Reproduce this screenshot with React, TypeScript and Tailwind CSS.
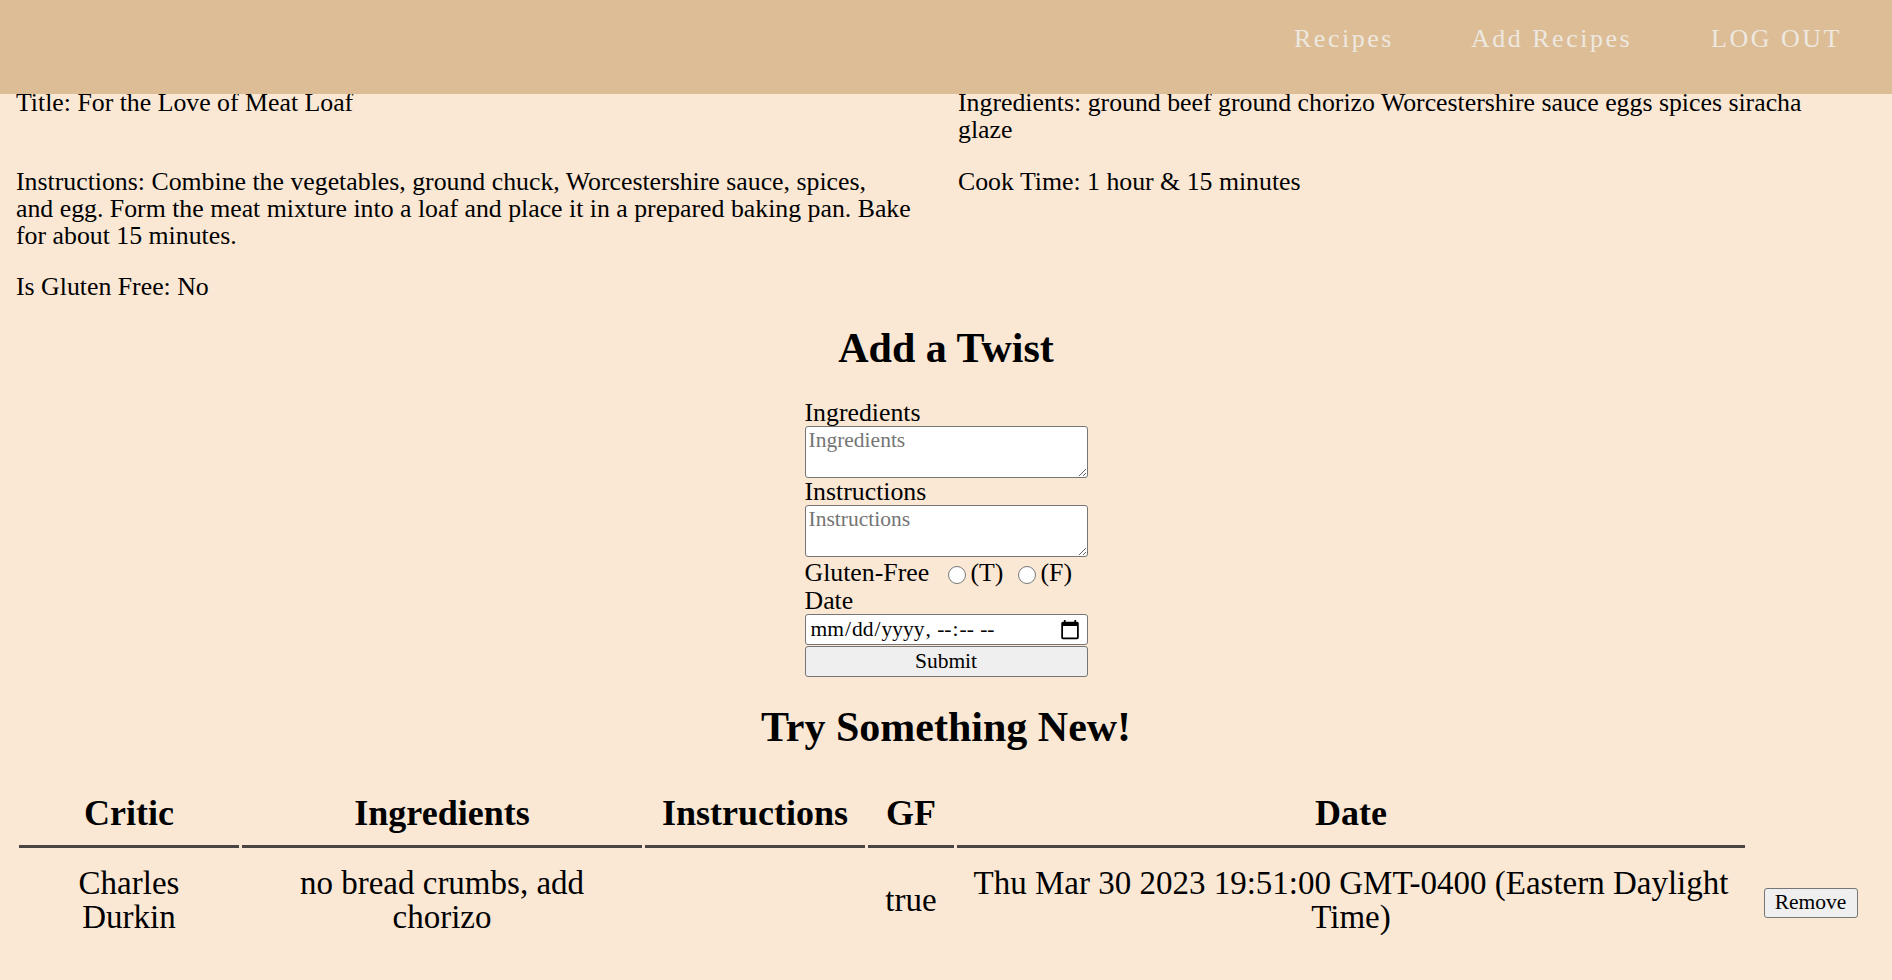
export default function App() {
  return (
    <div className="min-h-screen bg-[#FAE8D5] font-['Liberation_Serif',serif] text-black">
      <header className="fixed top-0 left-0 right-0 z-10 h-[94px] bg-[#DDBD95]">
        <nav className="flex justify-end whitespace-nowrap pr-[51px] pt-[25px] text-[26px] leading-[27.3px] tracking-[2.5px] text-[#EDE8E0]">
          <a className="w-[177px] shrink-0 cursor-pointer">Recipes</a>
          <a className="w-[240px] shrink-0 cursor-pointer">Add Recipes</a>
          <a className="w-[130px] shrink-0 cursor-pointer">LOG OUT</a>
        </nav>
      </header>

      <main className="px-[16px] pt-[89px] pb-[29px]">
        <div className="grid grid-cols-2 gap-[24px] text-[25.8px] leading-[27.3px]">
          <p>Title: For the Love of Meat Loaf</p>
          <p>
            Ingredients: ground beef ground chorizo Worcestershire sauce eggs spices siracha
            <br />
            glaze
          </p>
          <p>
            Instructions: Combine the vegetables, ground chuck, Worcestershire sauce, spices,
            <br />
            and egg. Form the meat mixture into a loaf and place it in a prepared baking pan. Bake
            <br />
            for about 15 minutes.
          </p>
          <p>Cook Time: 1 hour &amp; 15 minutes</p>
          <p>Is Gluten Free: No</p>
        </div>

        <h2 className="mt-[27px] mb-[30px] text-center text-[42px] font-bold leading-[41px]">
          Add a Twist
        </h2>

        <form
          className="mx-auto flex w-[283px] flex-col text-[25.8px] leading-[27.3px]"
          onSubmit={(e) => e.preventDefault()}
        >
          <label htmlFor="ing">Ingredients</label>
          <textarea
            id="ing"
            placeholder="Ingredients"
            className="block h-[52px] w-[283px] resize-y rounded-[3px] border border-[#767676] bg-white px-[3px] py-[2px] text-[21.5px] leading-[23px] placeholder:text-[#757575]"
          />
          <label htmlFor="ins">Instructions</label>
          <textarea
            id="ins"
            placeholder="Instructions"
            className="block h-[52px] w-[283px] resize-y rounded-[3px] border border-[#767676] bg-white px-[3px] py-[2px] text-[21.5px] leading-[23px] placeholder:text-[#757575]"
          />
          <div className="mt-[2px] flex h-[27.3px] items-center">
            <span className="w-[143px] shrink-0">Gluten-Free</span>
            <input type="radio" name="gf" className="m-0 mt-[3px] h-[18px] w-[18px] shrink-0" />
            <span className="ml-[5px] w-[47px] shrink-0">(T)</span>
            <input type="radio" name="gf" className="m-0 mt-[3px] h-[18px] w-[18px] shrink-0" />
            <span className="ml-[5px]">(F)</span>
          </div>
          <label htmlFor="dt">Date</label>
          <input
            id="dt"
            type="datetime-local"
            className="block h-[31px] w-[283px] rounded-[3px] border border-[#767676] bg-white px-[4px] text-[21.5px] leading-[23px]"
          />
          <button
            type="submit"
            className="mt-[1px] block h-[31px] w-[283px] rounded-[3px] border border-[#767676] bg-[#EFEFEF] text-[21.5px] leading-[23px]"
          >
            Submit
          </button>
        </form>

        <h2 className="mt-[30px] mb-[30px] text-center text-[42px] font-bold leading-[41px]">
          Try Something New!
        </h2>

        <table className="w-full table-fixed border-separate border-spacing-[3px]">
          <thead>
            <tr className="text-[36px] font-bold leading-[34px]">
              <th className="w-[220px] border-b-[3px] border-[#4A4542] p-[15px] text-center">Critic</th>
              <th className="w-[400px] border-b-[3px] border-[#4A4542] p-[15px] text-center">Ingredients</th>
              <th className="w-[220px] border-b-[3px] border-[#4A4542] p-[15px] text-center">Instructions</th>
              <th className="w-[86px] border-b-[3px] border-[#4A4542] p-[15px] text-center">GF</th>
              <th className="w-[788px] border-b-[3px] border-[#4A4542] p-[15px] text-center">Date</th>
              <th className="p-[15px]"></th>
            </tr>
          </thead>
          <tbody>
            <tr className="text-[33px] leading-[34.1px]">
              <td className="p-[15px] text-center">
                Charles
                <br />
                Durkin
              </td>
              <td className="p-[15px] text-center">
                no bread crumbs, add
                <br />
                chorizo
              </td>
              <td className="p-[15px] text-center"></td>
              <td className="p-[15px] text-center">true</td>
              <td className="whitespace-nowrap p-[15px] text-center">
                Thu Mar 30 2023 19:51:00 GMT-0400 (Eastern Daylight
                <br />
                Time)
              </td>
              <td className="p-[15px] text-center">
                <button
                  type="button"
                  className="h-[30px] w-[94px] rounded-[3px] border border-[#767676] bg-[#EFEFEF] align-middle text-[21.5px] leading-[23px]"
                >
                  Remove
                </button>
              </td>
            </tr>
          </tbody>
        </table>
      </main>
    </div>
  );
}
